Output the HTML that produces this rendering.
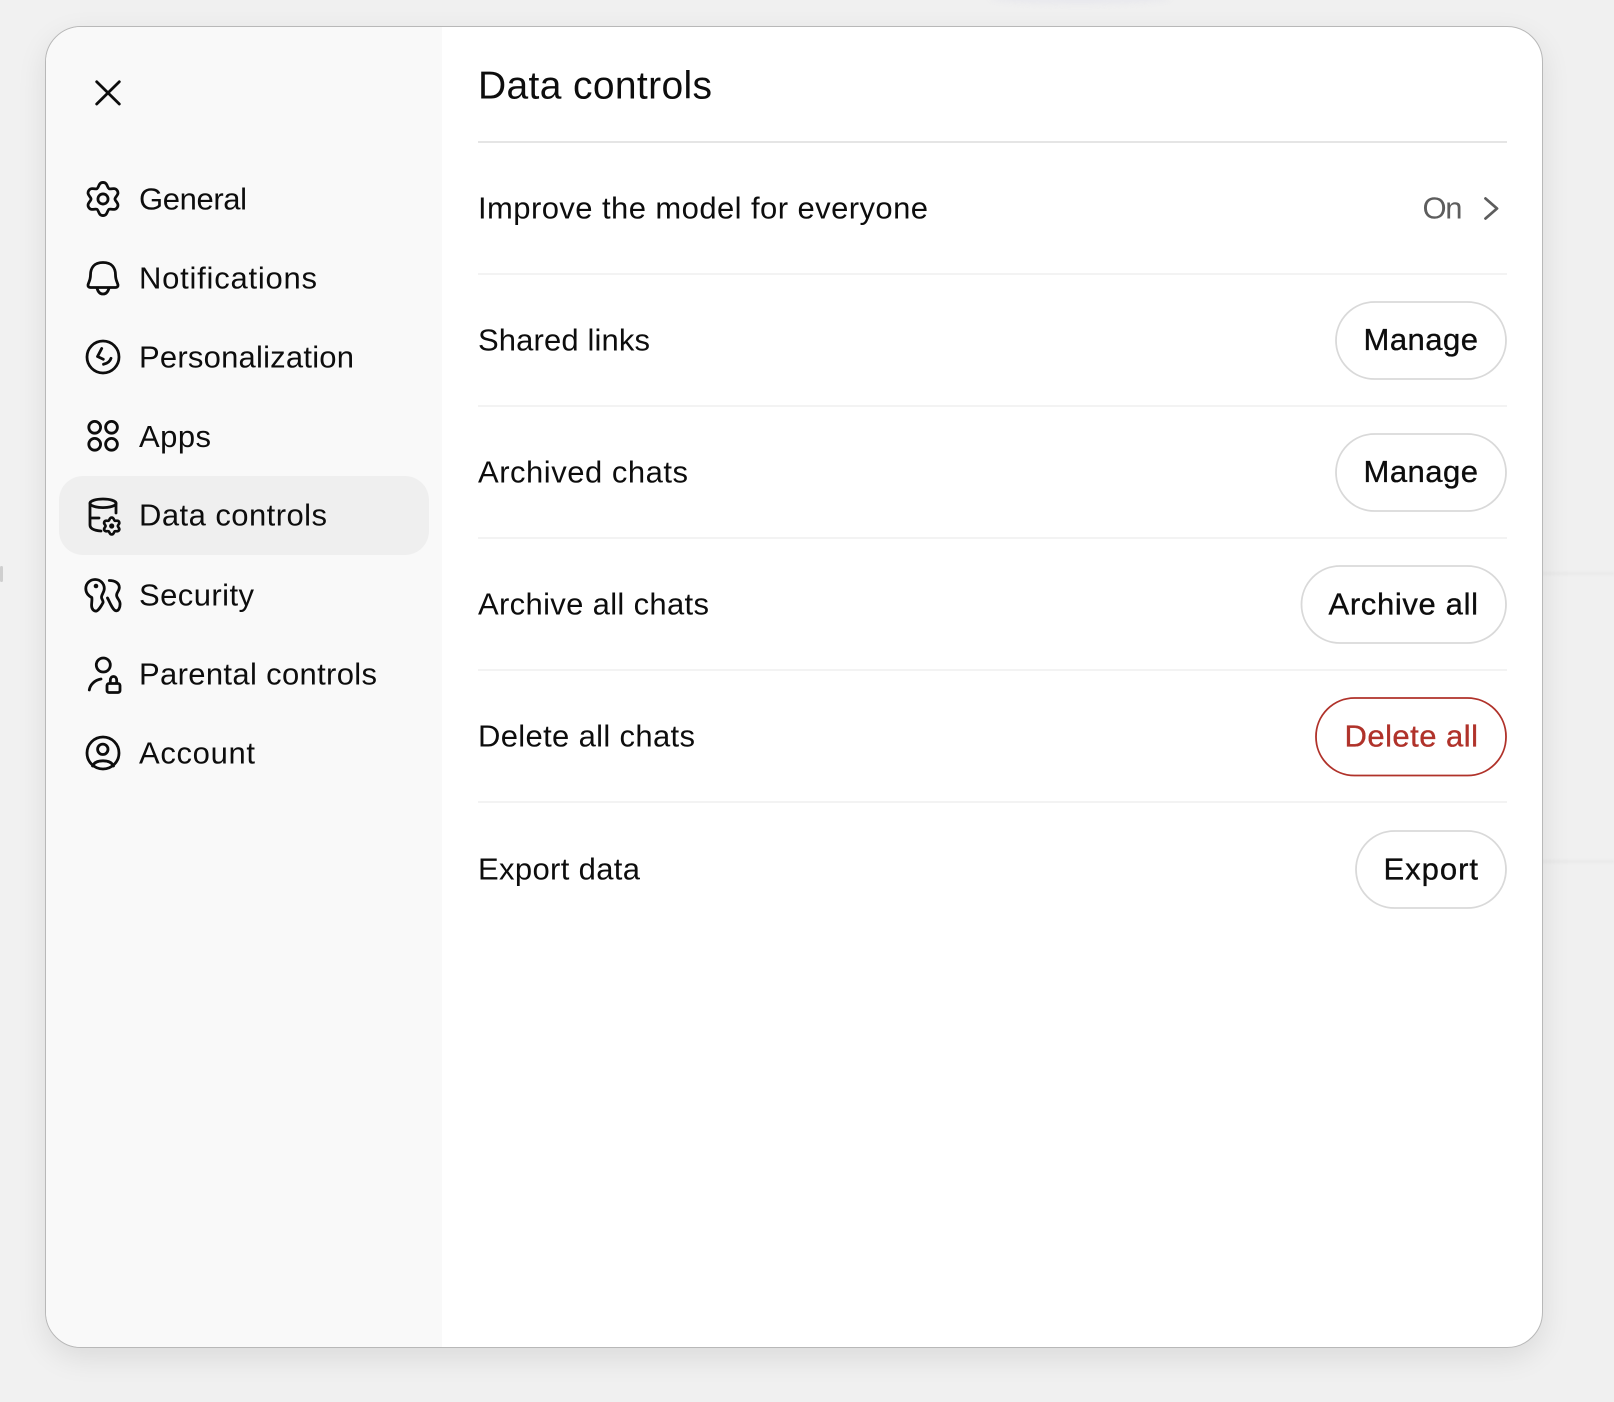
<!DOCTYPE html>
<html lang="en">
<head>
<meta charset="utf-8">
<title>Data controls</title>
<style>
html,body{margin:0;padding:0;width:1614px;height:1402px;overflow:hidden;background:#f0f0f0}
.band{position:absolute;left:0;top:0;width:80px;height:1402px;background:#f1f1f1}
.blob{position:absolute;left:990px;top:-8px;width:180px;height:12px;border-radius:50%;background:#e8e8ed;filter:blur(3px)}
.ln{position:absolute;left:1500px;width:114px;height:3px;background:#e9e9e9;filter:blur(1px)}
.mark{position:absolute;left:0;top:566px;width:3px;height:16px;border-radius:2px;background:#cfcfcf}
.modal{position:absolute;left:45px;top:26px;width:1496px;height:1320px;border-radius:36px;background:#fff;border:1px solid #b8b8b8;box-shadow:0 10px 30px rgba(0,0,0,.09)}
svg{position:absolute;left:0;top:0}
text{font-family:"Liberation Sans",sans-serif;font-size:31px;fill:#0d0d0d}
.b{stroke:#0d0d0d;stroke-width:.35px}
.i{fill:none;stroke:#0d0d0d;stroke-width:2.8;stroke-linecap:round;stroke-linejoin:round}
</style>
</head>
<body>
<div class="band"></div>
<div class="blob"></div>
<div class="ln" style="top:572px"></div>
<div class="ln" style="top:860px"></div>
<div class="mark"></div>
<div class="modal"></div>
<svg width="1614" height="1402" viewBox="0 0 1614 1402" xmlns="http://www.w3.org/2000/svg">
  <!-- sidebar -->
  <path d="M442 27H81.500A35.500 35.500 0 0 0 46 62.500V1311.500A35.500 35.500 0 0 0 81.500 1347H442Z" fill="#f9f9f9"/>
  <rect x="59" y="476" width="370" height="79" rx="24" fill="#efefef"/>

  <!-- close -->
  <path class="i" d="M96.700 81.700L119.300 104M119.300 81.700L96.700 104"/>

  <!-- general -->
  <g class="i" transform="translate(103 199) scale(.92)" style="stroke-width:3">
    <path d="M0-18C5-18 4.335-12.510 6.500-11.260C8.665-10.010 13.090-13.330 15.590-9C18.090-4.670 13-2.500 13 0C13 2.500 18.090 4.670 15.590 9C13.090 13.330 8.665 10.010 6.500 11.260C4.335 12.510 5 18 0 18C-5 18-4.335 12.510-6.500 11.260C-8.665 10.010-13.090 13.330-15.590 9C-18.090 4.670-13 2.500-13 0C-13-2.500-18.090-4.670-15.590-9C-13.090-13.330-8.665-10.010-6.500-11.260C-4.335-12.510-5-18 0-18Z"/>
    <circle r="5.500"/>
  </g>
  <!-- bell -->
  <g class="i">
    <path d="M103 262.500C94 262.500 90.500 268 90.500 275C90.500 280 88.500 282.500 88 285C87.800 286.500 89 287.500 90.500 287.500H115.500C117 287.500 118.200 286.500 118 285C117.500 282.500 115.500 280 115.500 275C115.500 268 112 262.500 103 262.500Z"/>
    <path d="M97 288C98 292 100 294 103 294C106 294 108 292 109 288"/>
  </g>
  <!-- personalization -->
  <g class="i">
    <circle cx="103" cy="357" r="16"/>
    <path d="M101.700 348.500L97.500 356.500L103.300 359.300"/>
    <path d="M103.500 364.300C107 363.500 110 361.500 111 358.300"/>
  </g>
  <!-- apps -->
  <g class="i">
    <circle cx="94.700" cy="427.300" r="5.900"/><circle cx="111.500" cy="427.300" r="5.900"/>
    <circle cx="94.700" cy="444.300" r="5.900"/><circle cx="111.500" cy="444.300" r="5.900"/>
  </g>
  <!-- data controls -->
  <g class="i">
    <ellipse cx="103" cy="503.300" rx="13" ry="4.300"/>
    <path d="M90 503.300V525C90 529 94.500 530.500 101 531"/>
    <path d="M116 503.300V513"/>
    <path d="M90.500 518H99"/>
    <g transform="translate(111.700 526) scale(.47)" style="stroke-width:5.700">
      <path d="M0-18C5-18 4.335-12.510 6.500-11.260C8.665-10.010 13.090-13.330 15.590-9C18.090-4.670 13-2.500 13 0C13 2.500 18.090 4.670 15.590 9C13.090 13.330 8.665 10.010 6.500 11.260C4.335 12.510 5 18 0 18C-5 18-4.335 12.510-6.500 11.260C-8.665 10.010-13.090 13.330-15.590 9C-18.090 4.670-13 2.500-13 0C-13-2.500-18.090-4.670-15.590-9C-13.090-13.330-8.665-10.010-6.500-11.260C-4.335-12.510-5-18 0-18Z"/>
    </g>
  </g>
  <circle cx="111.700" cy="526" r="2.600" fill="#0d0d0d"/>
  <!-- security -->
  <g class="i" transform="translate(.8 0)">
    <path d="M94.300 579.500C99.500 579.500 103.500 583.500 103.500 588.500C103.500 592 101 594 100.700 597C100.500 599 102.500 600 102.300 602.500C100.500 606 97.500 610.500 95.700 611C93 611.500 91 609 90.800 606C90.600 603 91.500 600 91 597.500C88 596 85 593 85 588.500C85 583.500 89.200 579.500 94.300 579.500Z"/>
    <path d="M108.500 580.500C114 580.500 118.500 583 118.500 587.500C118.500 591 115.500 592.500 115.800 595.500C116 598.500 119.300 600 119.300 604C119.300 608 117.500 610.800 115.500 610.800C112 610.800 109 602 106.700 598"/>
  </g>
  <circle cx="96" cy="586" r="2.300" fill="#0d0d0d"/>
  <!-- parental -->
  <g class="i">
    <circle cx="103.300" cy="665" r="7"/>
    <path d="M89.300 690C90 685 94.500 680 101 679"/>
    <rect x="107" y="683.500" width="13" height="9" rx="2"/>
    <path d="M110.300 683V680.500C110.300 678 111.700 676.500 113.500 676.500C115.300 676.500 116.700 678 116.700 680.500V683"/>
  </g>
  <!-- account -->
  <g class="i">
    <circle cx="103" cy="753" r="16"/>
    <circle cx="102.800" cy="749.300" r="5.200"/>
    <path d="M92.500 766C94 762.500 98 760.800 103 760.800C108 760.800 112 762.500 113.500 766"/>
  </g>

  <!-- sidebar labels -->
  <text x="139" y="209.500" textLength="108">General</text>
  <text x="139" y="288.500" textLength="178">Notifications</text>
  <text x="139" y="367.500" textLength="215">Personalization</text>
  <text x="139" y="447" textLength="72">Apps</text>
  <text x="139" y="525.500" textLength="188">Data controls</text>
  <text x="139" y="605.500" textLength="115">Security</text>
  <text x="139" y="684.500" textLength="238">Parental controls</text>
  <text x="139" y="763.500" textLength="116">Account</text>

  <!-- content -->
  <text x="478" y="98.500" textLength="234" style="font-size:39px">Data controls</text>
  <rect x="478" y="141" width="1029" height="2" fill="#e5e5e5"/>
  <rect x="478" y="273" width="1029" height="2" fill="#f3f3f3"/>
  <rect x="478" y="405" width="1029" height="2" fill="#f3f3f3"/>
  <rect x="478" y="537" width="1029" height="2" fill="#f3f3f3"/>
  <rect x="478" y="669" width="1029" height="2" fill="#f3f3f3"/>
  <rect x="478" y="801" width="1029" height="2" fill="#f3f3f3"/>

  <text x="478" y="218.500" textLength="450">Improve the model for everyone</text>
  <text x="478" y="350.500" textLength="172">Shared links</text>
  <text x="478" y="482.500" textLength="210">Archived chats</text>
  <text x="478" y="614.500" textLength="231">Archive all chats</text>
  <text x="478" y="746.500" textLength="217">Delete all chats</text>
  <text x="478" y="879.500" textLength="162">Export data</text>

  <text x="1422.500" y="218.500" textLength="40" style="fill:#5d5d5d">On</text>
  <path d="M1485.500 198.500L1497 208.500L1485.500 218.500" fill="none" stroke="#5d5d5d" stroke-width="2.800" stroke-linecap="round" stroke-linejoin="round"/>

  <!-- buttons -->
  <g fill="#fff" stroke="#d9d9d9" stroke-width="1.800">
    <rect x="1336" y="302" width="170" height="77" rx="38.500"/>
    <rect x="1336" y="434" width="170" height="77" rx="38.500"/>
    <rect x="1301.500" y="566" width="204.500" height="77" rx="38.500"/>
    <rect x="1356" y="831" width="150" height="77" rx="38.500"/>
  </g>
  <rect x="1316" y="698" width="190" height="77.500" rx="38.500" fill="#fff" stroke="#b0322a" stroke-width="1.800"/>
  <text class="b" x="1363.500" y="350" textLength="114.500">Manage</text>
  <text class="b" x="1363.500" y="482" textLength="114.500">Manage</text>
  <text class="b" x="1328.500" y="614.500" textLength="149.500">Archive all</text>
  <text class="b" x="1344.500" y="746.500" textLength="133.500" style="fill:#b0322a;stroke:#b0322a">Delete all</text>
  <text class="b" x="1383.500" y="879.500" textLength="94.500">Export</text>
</svg>
</body>
</html>
